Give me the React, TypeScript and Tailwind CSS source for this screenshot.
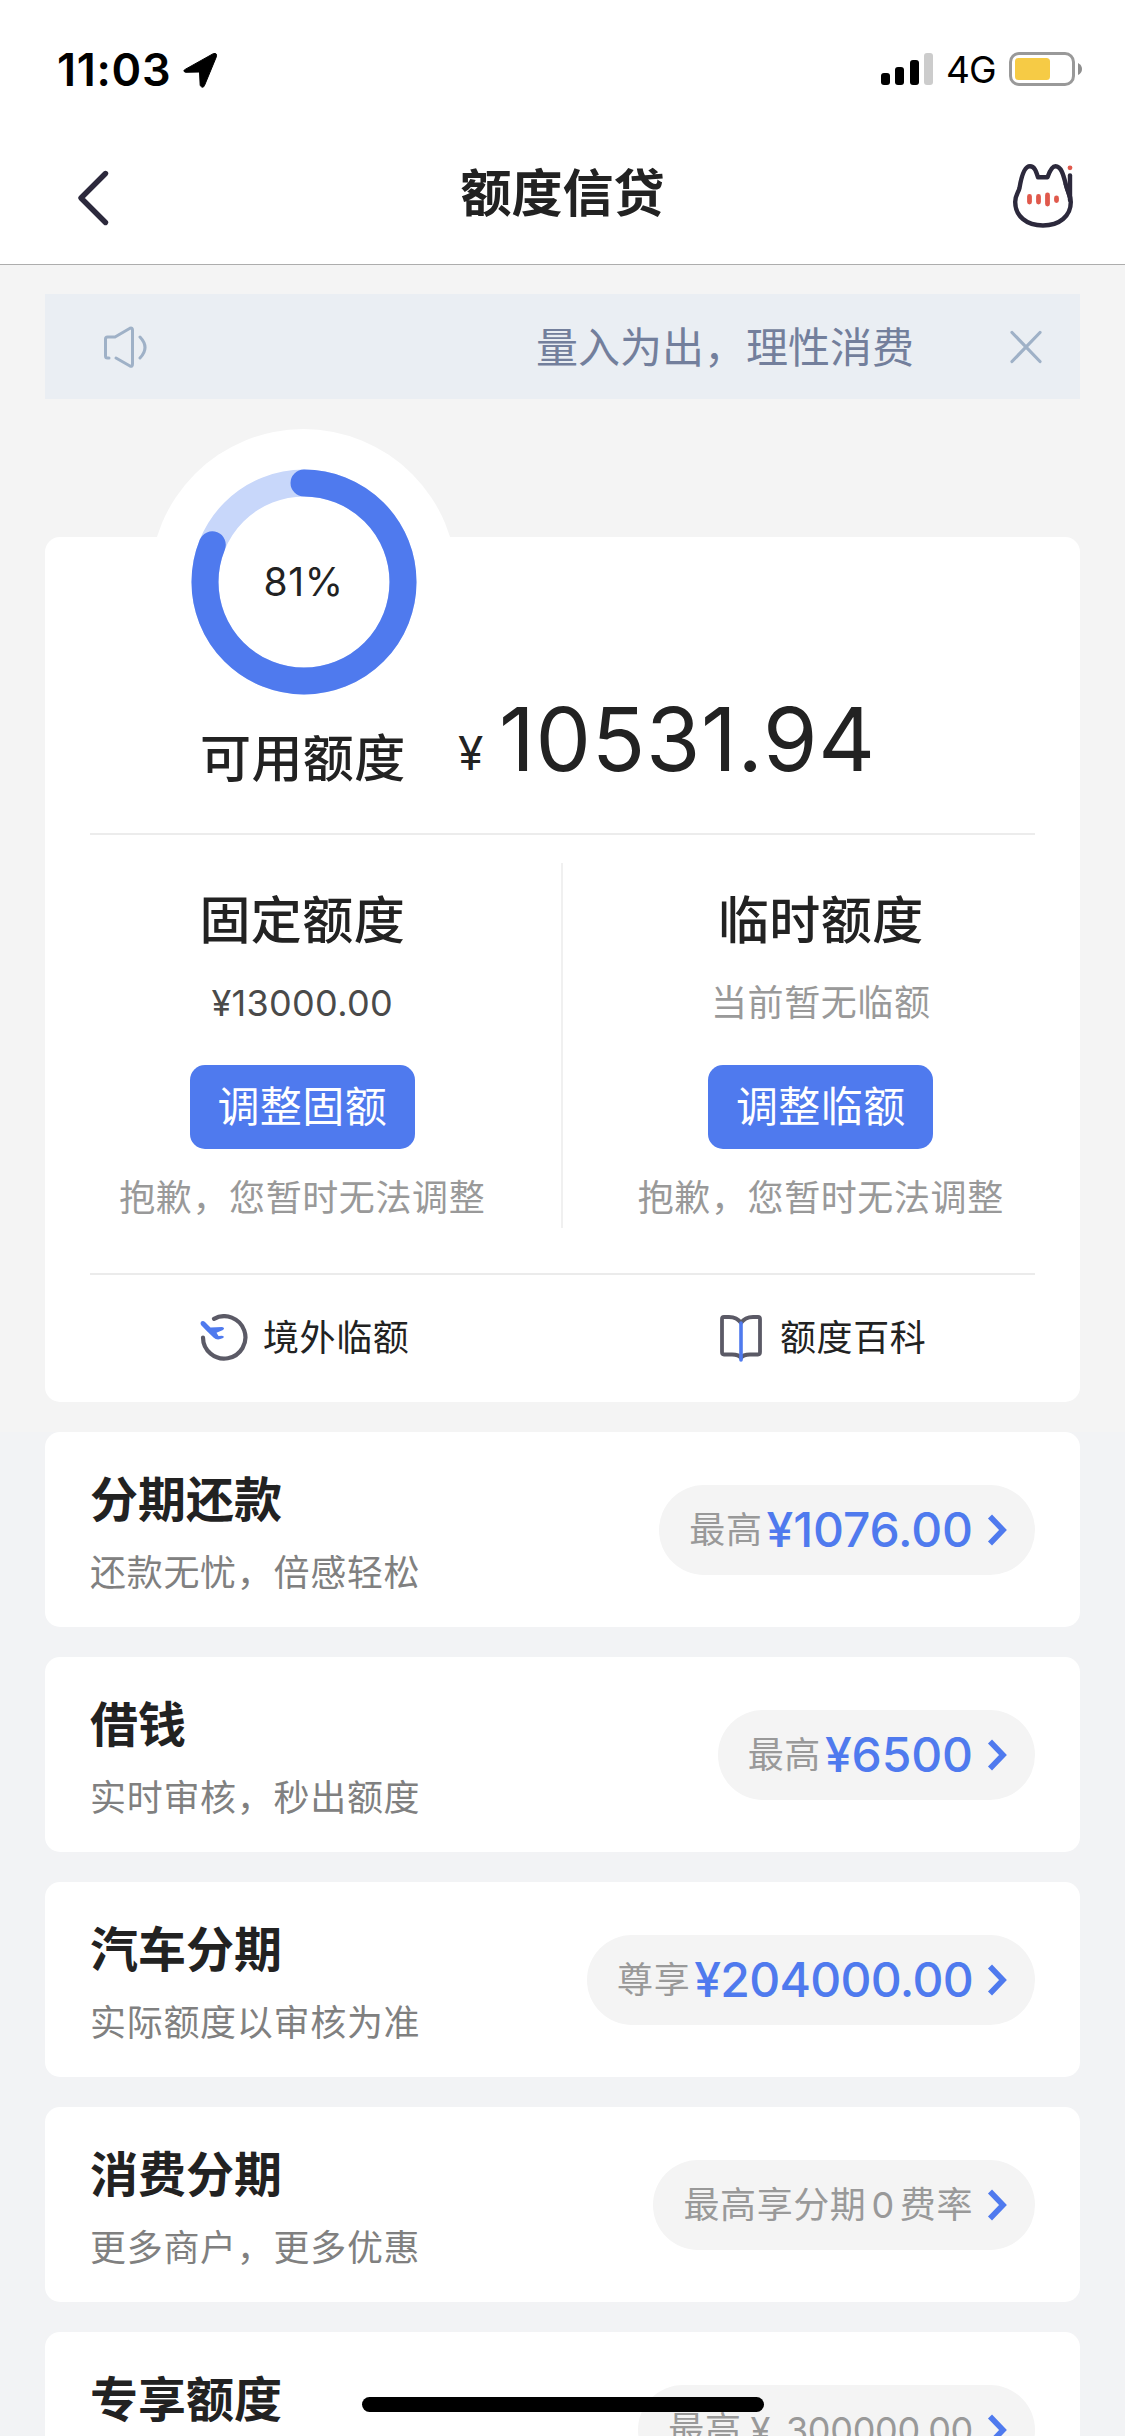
import React from 'react';

function StatusBar() {
  return (
    <div className="flex h-[132px] items-start justify-between pl-[57px] pr-[42px] pt-[39px] text-black">
      <div className="flex h-[60px] items-center">
        <span className="w-[125px] whitespace-nowrap pt-[1px] text-[45px] font-semibold leading-[60px] tracking-[0.7px]">11:03</span>
        <svg className="mt-[1px] h-[36px] w-[36px]" viewBox="0 0 36 36">
          <path d="M3.500 17.200 L31.200 1.700 Q35.600 0.400 34.200 5.200 L22.500 33.500 Q21 37 18.200 33.600 L17.500 20 L3.500 20.300 Q0.200 19 3.500 17.200Z" fill="#000" stroke="#000" strokeWidth="1" strokeLinejoin="round" />
        </svg>
      </div>
      <div className="flex h-[60px] items-center">
        <div className="flex h-[32px] w-[52px] items-end justify-between">
          <span className="h-[12px] w-[9px] rounded-[3px] bg-black" />
          <span className="h-[18px] w-[9px] rounded-[3px] bg-black" />
          <span className="h-[25px] w-[9px] rounded-[3px] bg-black" />
          <span className="h-[32px] w-[9px] rounded-[3px] bg-[#cccccc]" />
        </div>
        <span className="ml-[13px] w-[63px] pt-[2px] text-[37px] leading-[60px] tracking-[-1px]">4G</span>
        <svg className="h-[34px] w-[74px]" viewBox="0 0 74 34">
          <rect x="1.500" y="1.500" width="63" height="31" rx="8.500" fill="none" stroke="#999" strokeWidth="3" />
          <rect x="6" y="6" width="35" height="22" rx="3.500" fill="#f6cb45" />
          <path d="M69 11 Q73 13 73 17 Q73 21 69 23Z" fill="#8e8e8e" />
        </svg>
      </div>
    </div>
  );
}

function CatIcon() {
  return (
    <svg className="mb-[4px] h-[66px] w-[63px]" viewBox="0 0 63 66" fill="none" strokeLinecap="round" strokeLinejoin="round">
      <path d="M26 14.200 H35.500 C38 7 40.500 3.200 43.500 3.200 C49 3.200 51.200 11 54 22 C55.500 29 58.800 32 58.800 39 C58.800 53 47.500 62.500 31 62.500 C14.500 62.500 3.200 53 3.200 39 C3.200 32 6.500 29.500 7.500 25 C9.500 12.500 12.500 3.200 18 3.200 C22.500 3.200 24 8 26 14.200Z" stroke="#2c293c" strokeWidth="4.400" />
      <path d="M58 12.500 V37" stroke="#2c293c" strokeWidth="4.400" />
      <path d="M58 12.500 V37 L53 21" stroke="#2c293c" strokeWidth="3" />
      <circle cx="58" cy="4.800" r="2.400" fill="#e0594c" />
      <path d="M17.500 33.500 V39 M26.500 33.500 V39 M35.500 32 V41 M44.500 35 V37.500" stroke="#e0594c" strokeWidth="4.800" />
    </svg>
  );
}

function Header() {
  return (
    <header className="h-[265px] border-b border-[#adadad] bg-white">
      <StatusBar />
      <div className="grid h-[132px] grid-cols-[1fr_auto_1fr] items-center pl-[76px] pr-[50px]">
        <svg className="h-[60px] w-[64px]" viewBox="0 0 64 60" fill="none">
          <path d="M29.500 5.500 L5 30 L29.500 54.500" stroke="#2c293c" strokeWidth="5.400" strokeLinecap="round" strokeLinejoin="round" />
        </svg>
        <h1 className="-ml-[26px] pb-[9px] text-[51px] font-bold leading-[60px] text-[#222]">额度信贷</h1>
        <div className="flex justify-end">
          <CatIcon />
        </div>
      </div>
    </header>
  );
}

function Notice() {
  return (
    <div className="flex h-[105px] items-center bg-[#eaeef3] pl-[58px] pr-[36px] text-[#737f9c]">
      <svg className="h-[44px] w-[48px]" viewBox="0 0 48 44" fill="none" stroke="#9fb1c7" strokeWidth="3" strokeLinecap="round" strokeLinejoin="round">
        <path d="M6 33 H4.500 Q2.500 33 2.500 31 V14 Q2.500 12 4.500 12 H12 L27 3.300 Q29.500 2.500 29.500 5 V39 Q29.500 42 27 41 L13 33" />
        <path d="M37 12 Q47 22.500 37 33" />
      </svg>
      <span className="ml-auto whitespace-nowrap pt-[2px] text-[42px] leading-[60px]">量入为出，理性消费</span>
      <svg className="ml-[94px] h-[34px] w-[36px]" viewBox="0 0 36 34">
        <path d="M4 2.500 L32 31.500 M32 2.500 L4 31.500" stroke="#9fb1c7" strokeWidth="3.200" strokeLinecap="round" />
      </svg>
    </div>
  );
}

function QuotaRing() {
  const circumference = 2 * Math.PI * 99;
  return (
    <div className="relative flex h-[307px] w-[307px] items-center justify-center rounded-full bg-white pb-[2px]">
      <svg className="h-[226px] w-[226px] -rotate-90" viewBox="0 0 226 226" fill="none">
        <circle cx="113" cy="113" r="99" stroke="#c8d7fa" strokeWidth="27" />
        <circle cx="113" cy="113" r="99" stroke="#4f7aee" strokeWidth="27" strokeLinecap="round" strokeDasharray={`${circumference * 0.81} ${circumference}`} />
      </svg>
      <span className="absolute text-[39px] leading-[48px] tracking-[0.6px] text-[#222]">81%</span>
    </div>
  );
}

function QuotaColumn({ title, value, muted, action }: { title: string; value: string; muted?: boolean; action: string }) {
  return (
    <div className="flex flex-1 flex-col items-center">
      <h2 className="mt-[28px] text-[51px] font-medium leading-[60px] tracking-[0.4px] text-[#222]">{title}</h2>
      <p className={muted ? 'mt-[22px] text-[36px] leading-[60px] tracking-[0.6px] text-[#999]' : 'mt-[22px] text-[36px] leading-[60px] tracking-[0.3px] text-[#4a4a4a]'}>{value}</p>
      <button className="mt-[32px] h-[84px] w-[225px] rounded-[15px] bg-[#4f7aee] text-[42px] leading-[84px] tracking-[0.4px] text-white">{action}</button>
      <p className="mt-[19px] text-[36px] leading-[60px] tracking-[0.6px] text-[#999]">抱歉，您暂时无法调整</p>
    </div>
  );
}

function QuotaCard() {
  return (
    <section className="relative h-[865px] rounded-[15px] bg-white">
      <div className="absolute -top-[108px] left-[105px]">
        <QuotaRing />
      </div>
      <div className="flex h-[296px] items-end whitespace-nowrap pl-[155px] text-[#222]">
        <span className="mb-[44px] w-[258px] text-[51px] font-medium leading-[60px] tracking-[0.4px]">可用额度</span>
        <span className="mb-[50px] w-[41px] text-[46px] leading-[60px]">¥</span>
        <span className="mb-[44px] text-[88px] leading-[100px] tracking-[0.7px]">10531.94</span>
      </div>
      <div className="mx-[45px] h-[2px] bg-[#ececec]" />
      <div className="-ml-[1px] mr-[1px] flex h-[438px] pt-[28px]">
        <QuotaColumn title="固定额度" value="¥13000.00" action="调整固额" />
        <div className="h-[365px] w-[2px] bg-[#f0f0f0]" />
        <QuotaColumn title="临时额度" value="当前暂无临额" muted action="调整临额" />
      </div>
      <div className="mx-[45px] h-[2px] bg-[#ebebeb]" />
      <div className="flex h-[126px] items-center text-[36px] leading-[60px] tracking-[0.6px] text-[#222]">
        <div className="flex w-[517px] items-center pl-[153px]">
          <svg className="mr-[15px] h-[48px] w-[50px]" viewBox="0 0 50 48" fill="none">
            <path d="M16 4.800 A21.200 21.200 0 1 1 5 23.500" stroke="#5b5a66" strokeWidth="4.200" strokeLinecap="round" />
            <path d="M3 7.800 Q5 6.200 7 8 L12.500 13.500 L24 13 Q27.500 14 25 16 L18.500 18.800 L20.500 22 L24 21.800 Q27.500 22.500 24.500 24.300 Q19 26.800 15.500 23.500 L8.500 16.800 L3 11 Q2 9 3 7.800Z" fill="#4f7aee" />
          </svg>
          境外临额
        </div>
        <div className="flex items-center pl-[156px]">
          <svg className="mr-[16px] h-[50px] w-[46px]" viewBox="0 0 46 50" fill="none" strokeLinecap="round" strokeLinejoin="round">
            <path d="M23 10 Q19 4 11 4 H6 Q4 4 4 6 V39 Q4 41.500 6 41.500 H14 Q21 41.500 23 45 Q25 41.500 32 41.500 H40 Q42 41.500 42 39 V6 Q42 4 40 4 H35 Q27 4 23 10" stroke="#5b5a66" strokeWidth="3.800" />
            <path d="M23 10 V47" stroke="#4f7aee" strokeWidth="3.600" />
          </svg>
          额度百科
        </div>
      </div>
    </section>
  );
}

type Product = { title: string; note?: string; offer: React.ReactNode };

const products: Product[] = [
  { title: '分期还款', note: '还款无忧，倍感轻松', offer: <Offer label="最高" amount="¥1076.00" spacing="tracking-[-0.1px]" /> },
  { title: '借钱', note: '实时审核，秒出额度', offer: <Offer label="最高" amount="¥6500" spacing="tracking-[-0.1px]" /> },
  { title: '汽车分期', note: '实际额度以审核为准', offer: <Offer label="尊享" amount="¥204000.00" spacing="tracking-[-0.7px]" /> },
  { title: '消费分期', note: '更多商户，更多优惠', offer: <span>最高享分期<span className="mx-[5px]">0</span>费率</span> },
  { title: '专享额度', offer: <span>最高<span className="ml-[9px] mr-[15px]">¥</span><span className="tracking-[-0.3px]">300000.00</span></span> },
];

function Offer({ label, amount, spacing }: { label: string; amount: string; spacing: string }) {
  return (
    <>
      <span>{label}</span>
      <span className={`ml-[4px] text-[48px] font-medium text-[#4f7aee] ${spacing}`}>{amount}</span>
    </>
  );
}

function ProductCard({ title, note, offer }: Product) {
  return (
    <section className="flex h-[195px] shrink-0 items-center justify-between rounded-[15px] bg-white px-[45px]">
      <div className="h-[132px] whitespace-nowrap">
        <h3 className="text-[48px] font-bold leading-[72px] text-[#222]">{title}</h3>
        {note && <p className="mt-[1px] text-[36px] leading-[72px] tracking-[0.7px] text-[#808080]">{note}</p>}
      </div>
      <div className="flex h-[90px] items-center whitespace-nowrap rounded-full bg-[#f4f4f4] pl-[30px] pr-[27px] text-[36px] leading-[60px] tracking-[0.6px] text-[#999]">
        {offer}
        <svg className="ml-[13px] h-[34px] w-[22px]" viewBox="0 0 22 34" fill="none">
          <path d="M4 3.500 L17 17 L4 30.500" stroke="#4f7aee" strokeWidth="5.600" />
        </svg>
      </div>
    </section>
  );
}

export default function App() {
  return (
    <div className="relative h-[2436px] w-[1125px] overflow-hidden bg-[#f2f3f5] font-['Inter','Noto_Sans_CJK_SC',sans-serif]">
      <Header />
      <div className="h-[1167px] bg-[#f4f4f4] px-[45px] pt-[29px]">
        <Notice />
        <div className="h-[138px]" />
        <QuotaCard />
      </div>
      <div className="flex flex-col gap-[30px] px-[45px]">
        {products.map((product) => (
          <ProductCard key={product.title} {...product} />
        ))}
      </div>
      <div className="absolute bottom-[24px] left-[362px] h-[15px] w-[402px] rounded-full bg-black" />
    </div>
  );
}
